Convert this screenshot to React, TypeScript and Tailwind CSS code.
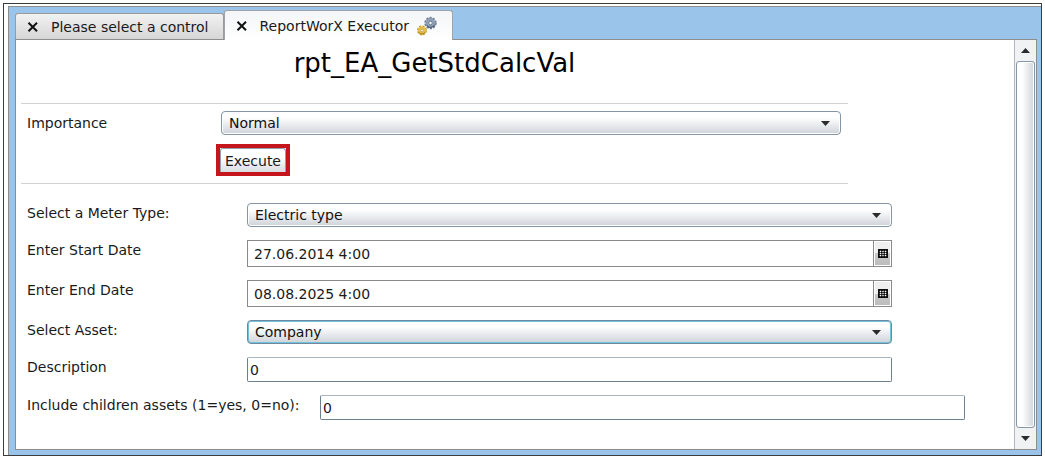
import { useState } from "react";
import type { ReactNode } from "react";

function Cross() {
  return (
    <svg viewBox="0 0 12 10" className="h-[10px] w-3" aria-hidden="true">
      <path d="M1.5 0.8 L10 9.2 M10 0.8 L1.5 9.2" stroke="#111" strokeWidth="2" fill="none" />
    </svg>
  );
}

function Gears() {
  return (
    <svg viewBox="0 0 20 20" className="h-5 w-5" aria-hidden="true">
      <circle cx="13.5" cy="7" r="5.2" fill="none" stroke="#6a7b92" strokeWidth="2" strokeDasharray="2.1 1.17" />
      <circle cx="13.5" cy="7" r="3.6" fill="#dfe8f2" stroke="#8c9cb2" strokeWidth="2.6" />
      <path d="M9.6 9.2 A4.6 4.6 0 0 0 17.6 9" fill="none" stroke="#4d5e76" strokeWidth="1.2" />
      <circle cx="13.5" cy="7" r="1.8" fill="#f4f9ff" stroke="#55667e" strokeWidth="0.9" />
      <circle cx="5" cy="14.5" r="4" fill="none" stroke="#c29a26" strokeWidth="2" strokeDasharray="1.9 1.24" />
      <circle cx="5" cy="14.5" r="2.8" fill="#fff6cf" stroke="#e3bd45" strokeWidth="2.6" />
      <path d="M1.8 16.2 A3.6 3.6 0 0 0 8.2 16.2" fill="none" stroke="#a07c14" strokeWidth="1" />
      <circle cx="5" cy="14.5" r="1.3" fill="#fff" stroke="#a07c14" strokeWidth="0.6" />
    </svg>
  );
}

function Arrow({ up = false }: { up?: boolean }) {
  return (
    <svg viewBox="0 0 9 5" className="h-[5px] w-[9px]" aria-hidden="true">
      <path d={up ? "M0 5 L4.5 0 L9 5 Z" : "M0 0 L9 0 L4.5 5 Z"} fill="#2b2b2b" />
    </svg>
  );
}

function CalendarGrid() {
  return (
    <svg viewBox="0 0 10 9" className="h-[9px] w-[10px]" aria-hidden="true">
      <rect width="10" height="9" fill="#0c0c0c" />
      <path d="M1 2.5H9M1 4.5H9M1 6.5H9M2.5 1V8M5 1V8M7.5 1V8" stroke="#8a8a8a" strokeWidth="0.5" />
      <path d="M2 2.5H8M2 4.5H8M2 6.5H8" stroke="#fff" strokeWidth="1" strokeDasharray="1 1.5" />
    </svg>
  );
}

function Dropdown({ id, options, active = false }: { id: string; options: string[]; active?: boolean }) {
  return (
    <div className="relative w-full">
      <select
        id={id}
        className={
          "block h-6 w-full appearance-none rounded border bg-linear-to-b from-white from-25% to-[#ced3d9] pl-[7px] pr-8 text-sm leading-5 text-[#111] outline-none " +
          (active
            ? "border-[#71879b] shadow-[inset_0_0_0_1px_#6fc3dc]"
            : "border-[#8495a6] shadow-[inset_0_0_0_1px_#ffffff]")
        }
      >
        {options.map((option) => (
          <option key={option}>{option}</option>
        ))}
      </select>
      <span className="pointer-events-none absolute inset-y-0 right-[11px] flex items-center">
        <Arrow />
      </span>
    </div>
  );
}

function DateBox({ id, value }: { id: string; value: string }) {
  return (
    <div className="flex h-[27px] w-full border border-[#8a8a8a] bg-white">
      <input id={id} defaultValue={value} className="min-w-0 flex-1 bg-transparent pl-[6px] text-sm outline-none" />
      <div className="flex border-l border-[#8a8a8a] p-px">
        <button
          type="button"
          aria-label="Open calendar"
          className="flex w-[15px] items-center justify-center bg-linear-to-b from-[#eeeeee] from-50% via-[#c9c9c9] via-50% to-[#bcbcbc]"
        >
          <CalendarGrid />
        </button>
      </div>
    </div>
  );
}

function TextBox({ id, value }: { id: string; value: string }) {
  return (
    <input
      id={id}
      defaultValue={value}
      className="block h-[25px] w-full rounded-[2px] border border-[#6d8090] border-t-[#a9b5bf] bg-white pl-[2px] text-sm outline-none"
    />
  );
}

function Field({ id, label, wide = false, children }: { id: string; label: string; wide?: boolean; children: ReactNode }) {
  return (
    <div className="flex items-start">
      <label htmlFor={id} className={wide ? "w-[293px] shrink-0" : "w-[220px] shrink-0"}>
        {label}
      </label>
      <div className="w-full max-w-[645px]">{children}</div>
    </div>
  );
}

const tabs = ["Please select a control", "ReportWorX Executor"];

export default function App() {
  const [current, setCurrent] = useState(1);

  return (
    <div className="flex min-h-screen bg-white p-[3px] font-['DejaVu_Sans',sans-serif] text-sm leading-5 text-[#1a1a1a]">
      <div className="flex flex-1 border border-[#3c3c3c] pl-1 pt-[2px]">
        <div className="flex flex-1 flex-col border-l border-t border-[#8d8d8d] bg-[#9ac4ea] pb-[5px] pl-[6px] pr-1 pt-[3px]">
          <div className="z-10 flex items-end">
            {tabs.map((tab, index) => (
              <div
                key={tab}
                className={
                  index === current
                    ? "-mb-px flex h-[30px] items-center gap-3 rounded-t-[3px] border border-b-0 border-[#a0a4a8] bg-linear-to-b from-[#f3f5f7] to-white pl-[11px] pr-[15px]"
                    : "flex h-[26px] items-center gap-3 rounded-t-[3px] border border-b-0 border-[#9a9a9a] bg-linear-to-b from-[#f2f2f2] to-[#d6d6d6] pl-[11px] pr-[14px]"
                }
              >
                <button type="button" aria-label={"Close " + tab}>
                  <Cross />
                </button>
                <button type="button" className="flex items-center gap-2 whitespace-nowrap" onClick={() => setCurrent(index)}>
                  {tab}
                  {index === 1 && <Gears />}
                </button>
              </div>
            ))}
          </div>

          <div className="flex flex-1 border border-[#8d8d8d] bg-white">
            <main className="min-w-0 flex-1 pb-[28px] pl-[5px]">
              <section className="max-w-[827px]">
                <h1 className="flex h-[63px] items-start justify-center pt-[7px] text-[26px] leading-8 text-black">rpt_EA_GetStdCalcVal</h1>
                <div className="border-y border-[#d2d2d2] pb-[7px] pl-[6px] pr-[7px] pt-[7px]">
                  <div className="flex items-center">
                    <label htmlFor="importance" className="w-[194px] shrink-0">
                      Importance
                    </label>
                    <Dropdown id="importance" options={["Normal", "High", "Low"]} />
                  </div>
                  <div className="flex pl-[189px] pt-[9px]">
                    <div className="border-4 border-[#c4161c]">
                      <button
                        type="button"
                        className="block h-6 rounded-t-[3px] border border-b-0 border-[#8fa0af] bg-linear-to-b from-white from-35% to-[#d9dde1] px-[4px]"
                      >
                        Execute
                      </button>
                    </div>
                  </div>
                </div>
              </section>

              <section className="flex flex-col gap-[13px] pl-[6px] pt-[19px]">
                <Field id="meter" label="Select a Meter Type:">
                  <Dropdown id="meter" options={["Electric type", "Gas type", "Water type"]} />
                </Field>
                <Field id="start" label="Enter Start Date">
                  <DateBox id="start" value="27.06.2014 4:00" />
                </Field>
                <Field id="end" label="Enter End Date">
                  <DateBox id="end" value="08.08.2025 4:00" />
                </Field>
                <Field id="asset" label="Select Asset:">
                  <Dropdown id="asset" options={["Company", "Building"]} active />
                </Field>
                <Field id="description" label="Description">
                  <TextBox id="description" value="0" />
                </Field>
                <Field id="children" label="Include children assets (1=yes, 0=no):" wide>
                  <TextBox id="children" value="0" />
                </Field>
              </section>
            </main>

            <div className="flex w-[22px] shrink-0 flex-col border-l border-[#aeb9c4] bg-[#f0f2f4]">
              <button type="button" aria-label="Scroll up" className="flex h-[21px] items-center justify-center">
                <Arrow up />
              </button>
              <div className="mx-px flex-1 rounded-[3px] border border-[#8797a7] bg-linear-to-r from-white from-30% to-[#cfd5da] shadow-[inset_0_0_0_1px_#ffffff]" />
              <button type="button" aria-label="Scroll down" className="flex h-[21px] items-center justify-center">
                <Arrow />
              </button>
            </div>
          </div>
        </div>
      </div>
    </div>
  );
}
